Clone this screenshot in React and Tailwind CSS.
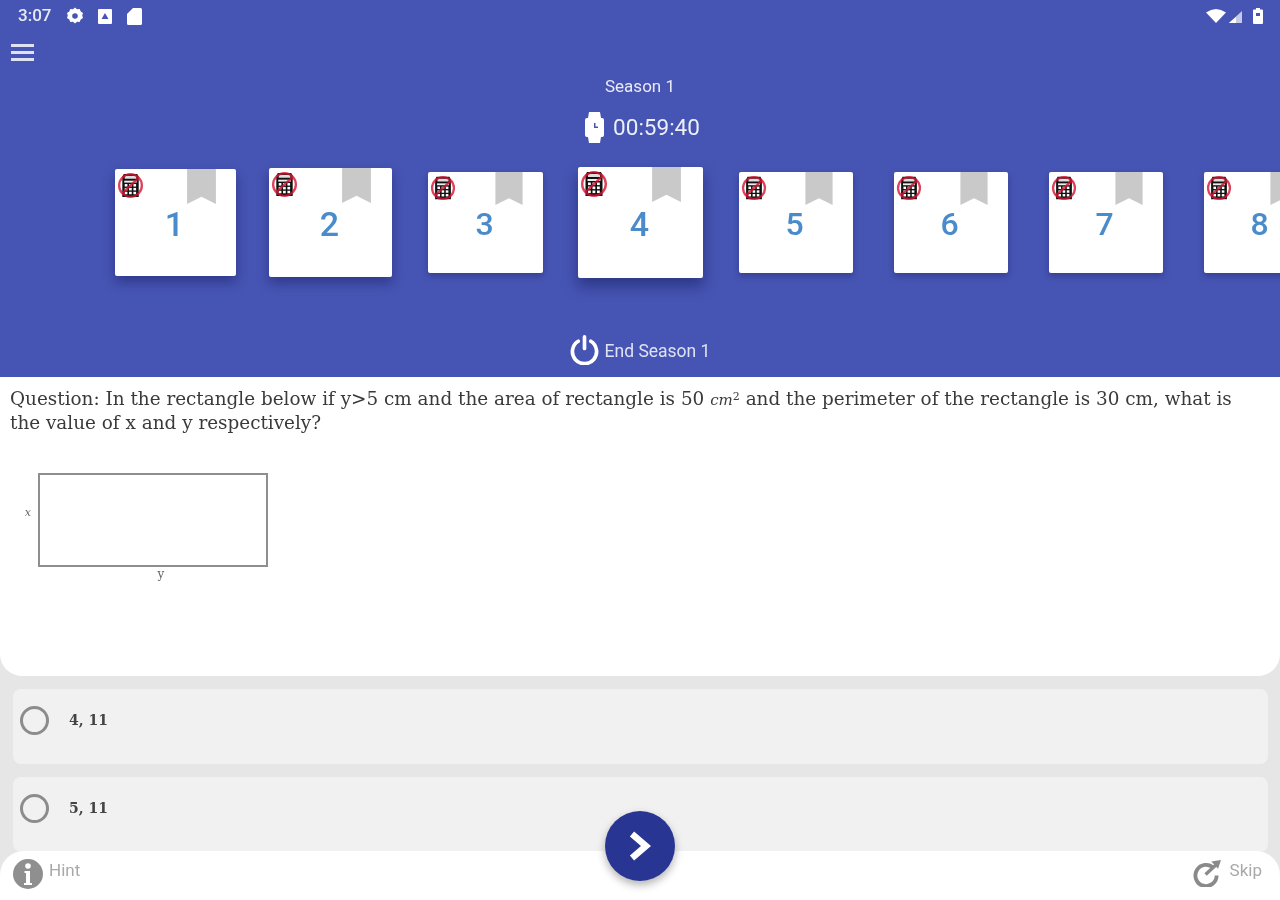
import React from "react";

function Calc({ size }) {
  return (
    <svg width={size} height={size} viewBox="0 0 28 28" className="shrink-0">
      <path d="M7 2h14l1.500 3v21h-17v-21z" fill="#111" />
      <rect x="8" y="4" width="12" height="3" fill="#ddd" />
      <rect x="7.500" y="9" width="13" height="2" fill="#eee" />
      {[12.500, 16.500, 20.500].map((y) =>
        [8, 12.500, 17].map((x) => <rect key={x + "-" + y} x={x} y={y} width="2.800" height="2.600" fill="#fff" />)
      )}
      <circle cx="14" cy="14" r="11.800" fill="none" stroke="#d3132f" strokeOpacity="0.8" strokeWidth="2.400" />
      <line x1="22.500" y1="6" x2="5.500" y2="22" stroke="#d3132f" strokeOpacity="0.8" strokeWidth="2.400" />
    </svg>
  );
}

function Card({ n, w, h, calc, mark, markH, text, right, shadow }) {
  return (
    <div className="w-[155px] shrink-0 flex justify-center">
      <div
        className={`bg-white rounded-[2px] flex flex-col items-center relative ${shadow}`}
        style={{ width: w, height: h }}
      >
        <div className="absolute left-[2px] top-[3px]">
          <Calc size={calc} />
        </div>
        <svg className="absolute top-0" style={{ right }} width={mark} height={markH} viewBox="0 0 28 34">
          <path d="M0 0H28V34L14 27L0 34Z" fill="#c9c9c9" />
        </svg>
        <span
          className="absolute left-0 right-[2px] text-center font-medium text-[#4a8ccb] leading-none"
          style={{ fontSize: text, top: "50%", transform: "translateY(-45%)", fontFamily: "Roboto, sans-serif" }}
        >
          {n}
        </span>
      </div>
    </div>
  );
}

function Option({ label }) {
  return (
    <div className="h-[75px] shrink-0 rounded-[8px] bg-[#f1f1f1] flex items-center pl-[7px] pb-[12px]">
      <div className="w-[29px] h-[29px] rounded-full border-[3px] border-[#8c8c8c]" />
      <span className="ml-[20px] text-[14px] font-bold text-[#444]" style={{ fontFamily: '"DejaVu Serif", serif' }}>
        {label}
      </span>
    </div>
  );
}

export default function App() {
  const small = "shadow-[0_3px_6px_rgba(20,25,90,0.35)]";
  const big = "shadow-[0_6px_12px_rgba(20,25,90,0.45)]";
  const cards = [
    { n: 1, w: 121, h: 107, calc: 27, mark: 29, markH: 35, text: 34, right: 20, shadow: big },
    { n: 2, w: 123, h: 109, calc: 27, mark: 29, markH: 35, text: 34, right: 21, shadow: big },
    { n: 3, w: 115, h: 101, calc: 26, mark: 28, markH: 33, text: 32, right: 20, shadow: small },
    { n: 4, w: 125, h: 111, calc: 28, mark: 29, markH: 35, text: 34, right: 22, shadow: "shadow-[0_8px_14px_rgba(20,25,90,0.5)]" },
    { n: 5, w: 114, h: 101, calc: 26, mark: 28, markH: 33, text: 32, right: 20, shadow: small },
    { n: 6, w: 114, h: 101, calc: 26, mark: 28, markH: 33, text: 32, right: 20, shadow: small },
    { n: 7, w: 114, h: 101, calc: 26, mark: 28, markH: 33, text: 32, right: 20, shadow: small },
    { n: 8, w: 114, h: 101, calc: 26, mark: 28, markH: 33, text: 32, right: 20, shadow: small },
  ];

  return (
    <div
      className="w-[1280px] h-[900px] relative overflow-hidden bg-[#e6e6e6] flex flex-col blur-[0.7px]"
      style={{ fontFamily: "Roboto, sans-serif" }}
    >
      <header className="h-[377px] shrink-0 bg-[#4654b3] flex flex-col text-white">
        <div className="h-[32px] shrink-0 flex items-center pl-[18px] pr-[17px]">
          <span className="text-[17px] font-medium text-[#e8eaf6]">3:07</span>
          <svg className="ml-[15px]" width="18" height="18" viewBox="0 0 18 18">
            <path fill="#fff" fillRule="evenodd" d="M9 0.500l2 1.800 2.700-.4 1 2.500 2.300 1.500-.8 2.600.8 2.600-2.300 1.500-1 2.500-2.700-.4-2 1.800-2-1.800-2.700.4-1-2.500L1 11.100l.8-2.600L1 5.900l2.300-1.500 1-2.500 2.700.4zM9 6.200a2.800 2.800 0 1 0 0 5.600 2.800 2.800 0 0 0 0-5.600z" />
          </svg>
          <svg className="ml-[14px]" width="14" height="15" viewBox="0 0 14 15">
            <path fill="#fff" fillRule="evenodd" d="M1 0h12a1 1 0 0 1 1 1v13a1 1 0 0 1-1 1H1a1 1 0 0 1-1-1V1a1 1 0 0 1 1-1zM7 4L3.500 10h7z" />
          </svg>
          <svg className="ml-[15px]" width="15" height="17" viewBox="0 0 15 17">
            <path fill="#fff" d="M6 0h7.500A1.500 1.500 0 0 1 15 1.500V15.500A1.500 1.500 0 0 1 13.500 17H1.500A1.500 1.500 0 0 1 0 15.500V6z" />
          </svg>
          <div className="ml-auto flex items-center">
            <svg width="20" height="14" viewBox="0 0 20 14" className="mr-[3px]">
              <path fill="#fff" d="M0 3.500Q10-3.500 20 3.500L10 14z" />
            </svg>
            <svg width="14" height="12" viewBox="0 0 14 12" className="mt-[2px] mr-[10px]">
              <path fill="#c5cae9" d="M13 0V12H0z" />
              <path fill="#fff" d="M7 6V12H0z" />
            </svg>
            <svg width="10" height="16" viewBox="0 0 10 16">
              <path fill="#fff" fillRule="evenodd" d="M3 0h4v1.500h2a1 1 0 0 1 1 1V15a1 1 0 0 1-1 1H1a1 1 0 0 1-1-1V2.500a1 1 0 0 1 1-1h2zM3 5v3h4V5z" />
            </svg>
          </div>
        </div>

        <div className="h-[40px] shrink-0 flex items-center pl-[11px]">
          <div className="w-[23px] flex flex-col gap-[4px]">
            <div className="h-[3px] bg-[#dfe2f3]" />
            <div className="h-[3px] bg-[#dfe2f3]" />
            <div className="h-[3px] bg-[#dfe2f3]" />
          </div>
        </div>

        <div className="h-[30px] shrink-0 flex items-center justify-center text-[17px] text-[#e8eaf6]">Season 1</div>

        <div className="h-[50px] shrink-0 flex items-center justify-center gap-[9px] pl-[5px] pt-[1px]">
          <svg width="19" height="31" viewBox="0 0 19 31">
            <path fill="#fff" fillRule="evenodd" d="M4 0h11l1 6h1a2 2 0 0 1 2 2v15a2 2 0 0 1-2 2h-1l-1 6H4l-1-6H2a2 2 0 0 1-2-2V8a2 2 0 0 1 2-2h1zM9 11v5h4v-1.500h-2.500V11z" />
          </svg>
          <span className="text-[22.500px] text-[#eceef8]">00:59:40</span>
        </div>

        <div className="h-[140px] shrink-0 flex items-center pl-[98px]">
          {cards.map((c) => (
            <Card key={c.n} {...c} />
          ))}
        </div>

        <div className="mt-auto h-[50px] flex items-center justify-center gap-[6px]">
          <svg width="29" height="31" viewBox="0 0 30 32" className="-mt-[5px]">
            <path d="M8.500 7.500a12.500 12.500 0 1 0 13 0" fill="none" stroke="#fff" strokeWidth="3.800" strokeLinecap="round" />
            <line x1="15" y1="3" x2="15" y2="15" stroke="#fff" strokeWidth="3.800" strokeLinecap="round" />
          </svg>
          <span className="text-[17.500px] text-[#dfe2f3] -mt-[2px]">End Season 1</span>
        </div>
      </header>

      <main className="h-[299px] shrink-0 bg-white rounded-b-[22px] pl-[10px] pr-[30px] pt-[10px]">
        <p className="text-[18.400px] leading-[24px] text-[#3a3a3a]" style={{ fontFamily: '"DejaVu Serif", serif' }}>
          Question: In the rectangle below if y&gt;5 cm and the area of rectangle is 50{" "}
          <span className="italic text-[15px] leading-none">cm</span>
          <sup className="text-[11px] leading-none">2</sup> and the perimeter of the rectangle is 30 cm, what is the value of x and y
          respectively?
        </p>
        <div className="mt-[38px] flex">
          <div className="w-[28px] h-[94px] flex items-center justify-end pr-[7px] pb-[13px] text-[11px] italic text-[#666]" style={{ fontFamily: '"DejaVu Serif", serif' }}>
            x
          </div>
          <div className="w-[230px]">
            <div className="h-[94px] border-2 border-[#8f8f8f]" />
            <div className="text-[12px] text-[#666] text-center pl-[16px] leading-[14px]" style={{ fontFamily: '"DejaVu Serif", serif' }}>
              y
            </div>
          </div>
        </div>
      </main>

      <section className="flex-1 min-h-0 px-[13px] pr-[12px] pt-[13px] flex flex-col gap-[13px]">
        <Option label="4, 11" />
        <Option label="5, 11" />
      </section>

      <footer className="h-[49px] shrink-0 bg-white rounded-t-[24px] flex items-center justify-between pl-[13px] pr-[18px] pb-[8px] text-[#a9a9a9] text-[17px] z-10">
        <div className="flex items-center gap-[6px]">
          <div className="w-[30px] h-[30px] rounded-full bg-[#8f8f8f] flex items-center justify-center mt-[4px]">
            <svg width="8" height="22" viewBox="0 0 8 22">
              <circle cx="4" cy="3" r="2.800" fill="#fff" />
              <path d="M0.500 8h5.500v12h2v2H0v-2h2V10H0.500z" fill="#fff" />
            </svg>
          </div>
          <span className="-mt-[2px]">Hint</span>
        </div>
        <div className="flex items-center gap-[8px]">
          <svg width="30" height="27" viewBox="0 0 31 28" className="mt-[4px]">
            <path d="M22.500 8.500a11 11 0 1 0 3 7.500" fill="none" stroke="#8a8a8a" strokeWidth="4" />
            <path d="M14 15L25 5" stroke="#8a8a8a" strokeWidth="3.500" />
            <path d="M20 1.500L30 0L27 9z" fill="#8a8a8a" />
          </svg>
          <span className="-mt-[2px]">Skip</span>
        </div>
      </footer>

      <button className="absolute left-[605px] top-[811px] w-[70px] h-[70px] rounded-full bg-[#283593] flex items-center justify-center shadow-[0_4px_8px_rgba(0,0,0,0.3)] z-20">
        <svg width="26" height="32" viewBox="0 0 26 32">
          <path d="M5 4L19 16L5 28" fill="none" stroke="#fff" strokeWidth="6.500" strokeLinejoin="miter" />
        </svg>
      </button>
    </div>
  );
}
